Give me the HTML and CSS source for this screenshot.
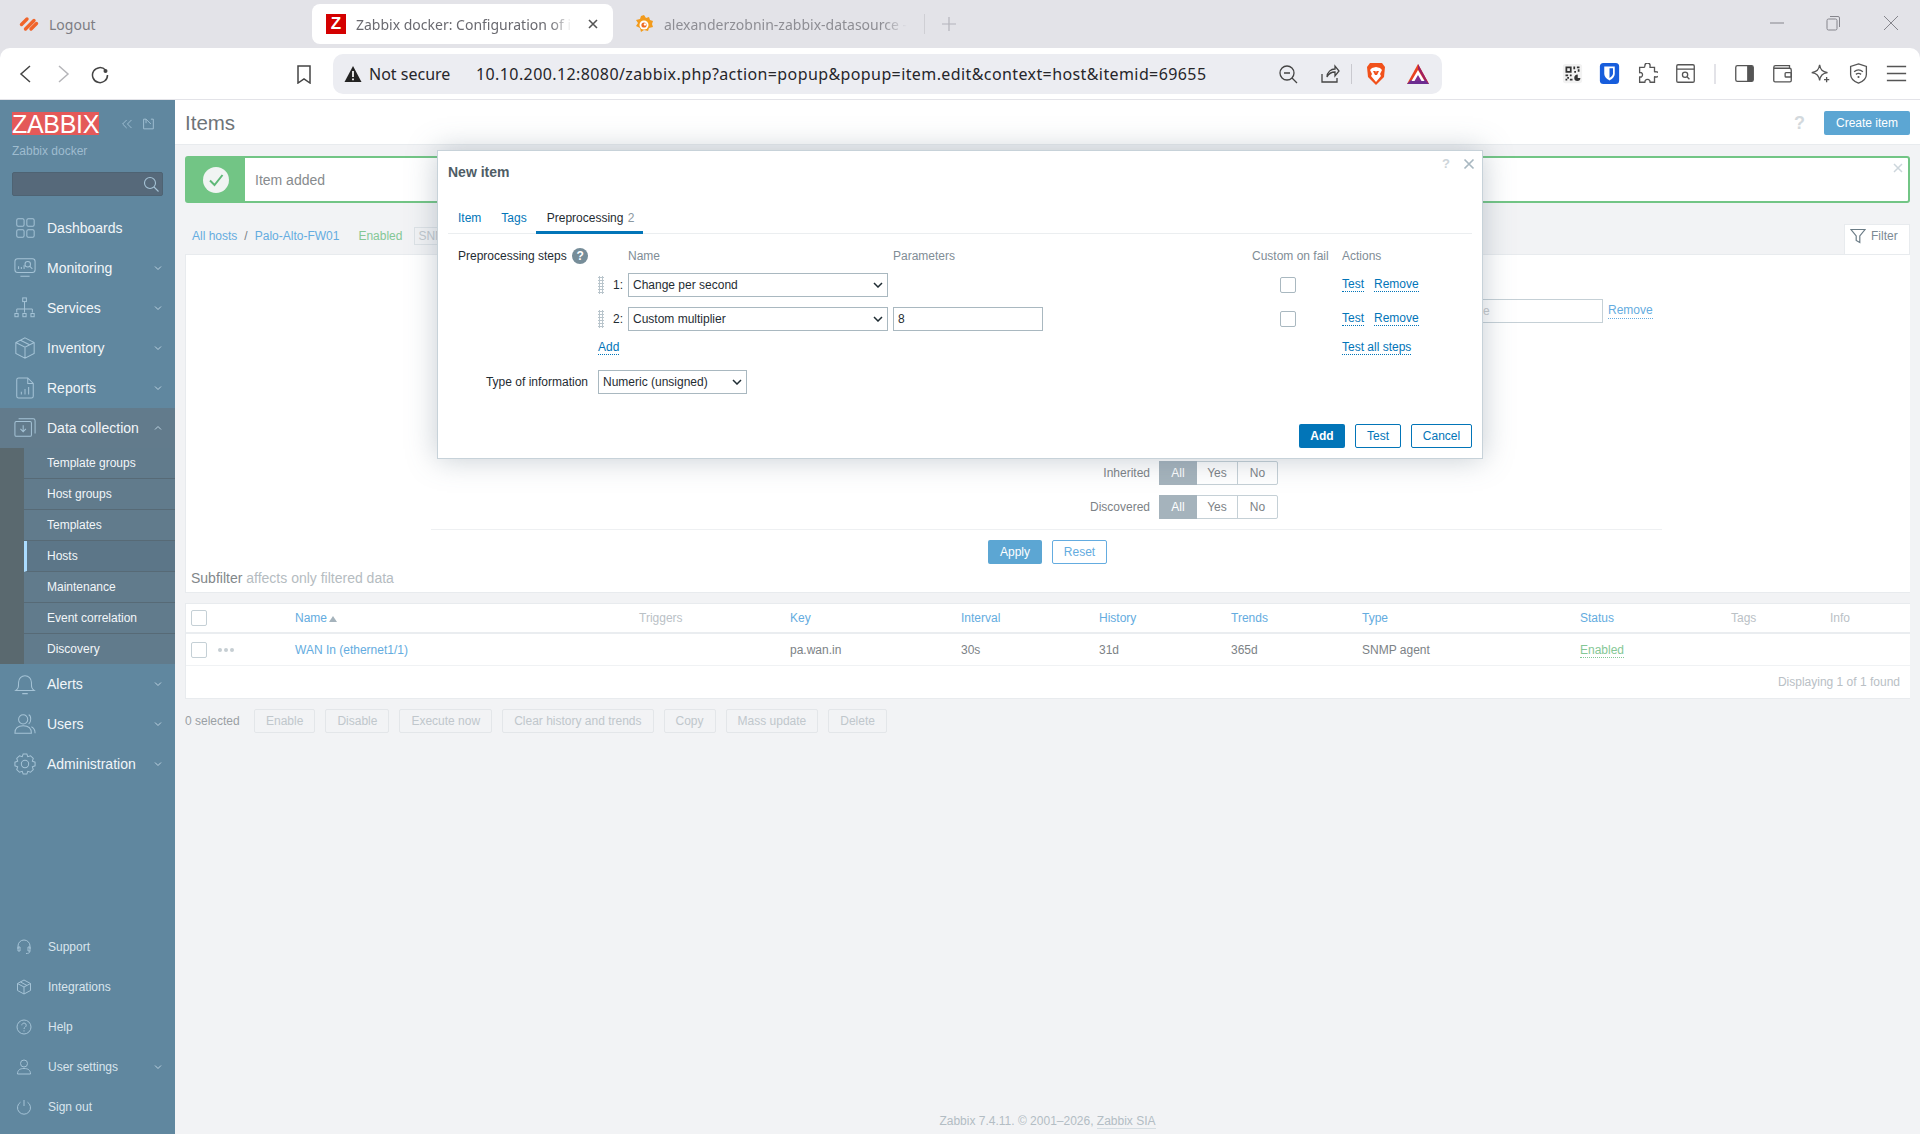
FILE: index.html
```html
<!DOCTYPE html>
<html lang="en">
<head>
    <meta charset="UTF-8">
    <title>Items</title>
    <link rel="stylesheet" href="styles.css">
</head>
<body>
<!-- browser tabs -->
<div class="tabs">
    <div class="tab tab-logout">
        <svg class="fav" viewBox="0 0 20 20"><path d="M2.500 10.500 8 5M6.500 15 15 6.500M12 15l5.500-5.500" fill="none" stroke="#f0642a" stroke-width="3.400" stroke-linecap="round"/></svg>
        <span>Logout</span>
    </div>
    <div class="tab tab-active">
        <div class="fav-z">Z</div>
        <span class="tab-title">Zabbix docker: Configuration of i</span>
        <svg class="tab-close" viewBox="0 0 12 12"><path d="M2 2l8 8M10 2l-8 8" stroke="#555" stroke-width="1.6" fill="none"/></svg>
    </div>
    <div class="tab tab-grafana">
        <svg class="fav" viewBox="0 0 20 20"><path d="M10 1l2 3 3-1 1 3 3 1-1 3 1 3-4 1-1 3-4-1-3 2-1-4-4-2 2-3-2-3 4-1 1-3z" fill="#f29b1d"/><circle cx="10" cy="11" r="4.500" fill="#fff"/><circle cx="10" cy="11" r="2.600" fill="#ef6b22"/><circle cx="11" cy="10.400" r="1.200" fill="#fff"/></svg>
        <span class="tab-title">alexanderzobnin-zabbix-datasource -</span>
    </div>
    <div class="tab-sep"></div>
    <svg class="tab-plus" viewBox="0 0 14 14"><path d="M7 0v14M0 7h14" stroke="#b4b4bb" stroke-width="1.2"/></svg>
    <div class="win">
        <svg viewBox="0 0 20 20"><path d="M3 10h14" stroke="#85858c" stroke-width="1"/></svg>
        <svg class="win-restore" viewBox="0 0 20 20"><rect x="4" y="6" width="10" height="11" rx="1.500" fill="none" stroke="#85858c"/><path d="M7 3.500h8a1.500 1.500 0 0 1 1.500 1.500V14" fill="none" stroke="#85858c"/></svg>
        <svg viewBox="0 0 20 20"><path d="M3 3l14 14M17 3L3 17" stroke="#85858c" stroke-width="1"/></svg>
    </div>
</div>

<!-- browser toolbar -->
<div class="toolbar">
    <svg class="tool" viewBox="0 0 20 20"><path d="M14 2 5 10l9 8" fill="none" stroke="#444" stroke-width="1.500"/></svg>
    <svg class="tool" viewBox="0 0 20 20"><path d="M6 2l9 8-9 8" fill="none" stroke="#b5b5b9" stroke-width="1.500"/></svg>
    <svg class="tool" viewBox="0 0 20 20"><path d="M15.500 6A7.500 7.500 0 1 0 17.500 11" fill="none" stroke="#444" stroke-width="1.500"/><circle cx="15.500" cy="7" r="2" fill="#444"/></svg>
    <svg class="tool tool-mark" viewBox="0 0 20 20"><path d="M4 2h12v17l-6-4-6 4z" fill="none" stroke="#444" stroke-width="1.500"/></svg>
    <div class="address">
        <svg class="warn" viewBox="0 0 18 18"><path d="M9 1l8.500 16H.5z" fill="#222"/><path d="M9 6v6M9 13.500v1.800" stroke="#fff" stroke-width="1.700"/></svg>
        <span class="not-secure">Not secure</span>
        <span class="url">10.10.200.12:8080/zabbix.php?action=popup&amp;popup=item.edit&amp;context=host&amp;itemid=69655</span>
        <svg class="addr-zoom" viewBox="0 0 20 20"><circle cx="9" cy="9" r="7" fill="none" stroke="#444" stroke-width="1.300"/><path d="M14 14l5 5M6 9h6" stroke="#444" stroke-width="1.300"/></svg>
        <svg class="addr-share" viewBox="0 0 20 20"><path d="M2 10v8h15v-4M7 13c0-5 4-8 8-8V2l4 5-4 5V8c-3 0-6 1-8 5z" fill="none" stroke="#444" stroke-width="1.300"/></svg>
        <div class="addr-sep"></div>
        <svg class="addr-brave" viewBox="0 0 20 24"><path d="M4 1h12l3 4-1 10-8 8-8-8L1 5z" fill="#f1511b"/><path d="M6 6l4-1 4 1 2 2-2 4 1 2-5 6-5-6 1-2-2-4z" fill="#fff"/><path d="M7 9h2.500L10 11l.5-2H13l-2 4h-2z" fill="#f1511b"/></svg>
        <svg class="addr-bat" viewBox="0 0 24 22"><path d="M12 1 1 21h22z" fill="#e8431f"/><path d="M12 1l11 20-4-3-7-12z" fill="#9e1f63"/><path d="M1 21h22l-4-4H5z" fill="#6c2c91"/><path d="M12 7l6.500 11h-13z" fill="#fff"/><path d="M12 12l-3.500 6h7z" fill="#7d2e8e"/></svg>
    </div>
    <div class="tools-right">
        <svg class="tool-r" viewBox="0 0 24 24"><rect x="1" y="1" width="22" height="22" rx="3" fill="#f2f2f2"/><path d="M4 4h7v7H4zM6 6v3h3V6zM13 4h2v3h-2zM17 4h3v2h-3zM18 7h2v3h-2zM14 9h2v2h-2zM4 13h3v2H4zM9 13h2v2H9zM6 16h2v2H6zM4 18h2v2H4zM9 18h3v2H9z" fill="#333" fill-rule="evenodd"/><path d="M14 17a4 4 0 0 1 4-4v4h3a3.500 3.500 0 0 1-7 0z" fill="#333"/></svg>
        <svg class="tool-r" viewBox="0 0 24 24"><rect x="1" y="0" width="22" height="24" rx="4" fill="#175ddc"/><path d="M6 4h12v8c0 4-3 6-6 8-3-2-6-4-6-8z" fill="#fff"/><path d="M12 6h4v6c0 2-2 4-4 5z" fill="#175ddc"/></svg>
        <svg class="tool-r" viewBox="0 0 24 24"><path d="M9 3a3 3 0 0 1 6 0c0 1-.5 2 0 2h5v5c0 .6 1-.2 2 0a3 3 0 0 1 0 6c-1 0-2-.6-2 0v6h-5c-.6 0 .2-1.500-.5-2a3 3 0 0 0-5 0c-.7.500 0 2-.5 2H3v-6c0-.7 1.500.4 2 0a3 3 0 0 0 0-5c-.5-.4-2 .6-2 0V5h5c.7 0 1-1 1-2z" fill="none" stroke="#555" stroke-width="1.500"/></svg>
        <svg class="tool-r" viewBox="0 0 24 24"><rect x="2" y="2" width="20" height="20" rx="1.500" fill="none" stroke="#555" stroke-width="1.500"/><path d="M2 7h20" stroke="#555" stroke-width="1.500"/><circle cx="11.500" cy="13.500" r="3" fill="none" stroke="#555" stroke-width="1.500"/><path d="M14 16l2.500 2.500" stroke="#555" stroke-width="1.500"/></svg>
        <div class="tool-sep"></div>
        <svg class="tool-r" viewBox="0 0 24 24"><rect x="2" y="3" width="20" height="18" rx="2" fill="none" stroke="#555" stroke-width="1.500"/><path d="M15 3h5a2 2 0 0 1 2 2v14a2 2 0 0 1-2 2h-5z" fill="#555"/></svg>
        <svg class="tool-r" viewBox="0 0 24 24"><path d="M20 6V3H4a2 2 0 0 0-2 2v15a1.500 1.500 0 0 0 1.500 1.500h17a1.500 1.500 0 0 0 1.500-1.500V8a2 2 0 0 0-2-2H2" fill="none" stroke="#555" stroke-width="1.500"/><rect x="15" y="11" width="7" height="5" rx="1" fill="none" stroke="#555" stroke-width="1.500"/></svg>
        <svg class="tool-r" viewBox="0 0 24 24"><path d="M11 2c1 6 3 8 9 9-6 1-8 3-9 9-1-6-3-8-9-9 6-1 8-3 9-9z" fill="none" stroke="#555" stroke-width="1.500"/><path d="M19 16v6M16 19h6" stroke="#555" stroke-width="1.500"/></svg>
        <svg class="tool-r" viewBox="0 0 24 24"><path d="M12 1l9 3v9c0 5-4 8-9 10-5-2-9-5-9-10V4z" fill="none" stroke="#555" stroke-width="1.500"/><path d="M7 10c3-2.500 7-2.500 10 0M9 13c2-1.500 4-1.500 6 0" fill="none" stroke="#555" stroke-width="1.500"/><circle cx="12" cy="16" r="1.200" fill="#555"/></svg>
        <svg class="tool-r" viewBox="0 0 24 24"><path d="M1 4h22M1 12h22M1 20h22" stroke="#555" stroke-width="1.500"/></svg>
    </div>
</div>

<div class="app">
    <!-- zabbix sidebar -->
    <div class="side">
        <div class="side-head">
            <div class="logo-row">
                <div class="logo">ZABBIX</div>
                <svg class="head-ico" viewBox="0 0 16 16"><path d="M7 3 2 8l5 5M13 3 8 8l5 5" fill="none" stroke="#a5c3d6" stroke-width="1.100"/></svg>
                <svg class="head-ico" viewBox="0 0 16 16"><path d="M5 2H2v12h12V2h-3M5 2l6 6M5 2v5" fill="none" stroke="#a5c3d6" stroke-width="1.100"/></svg>
            </div>
            <div class="server">Zabbix docker</div>
            <div class="side-search">
                <svg viewBox="0 0 16 16"><circle cx="7" cy="7" r="5.500" fill="none" stroke="#a5c3d6" stroke-width="1.100"/><path d="M11 11l4.500 4.500" stroke="#a5c3d6" stroke-width="1.100"/></svg>
            </div>
        </div>
        <div class="nav-item">
            <svg class="nav-ico" viewBox="0 0 24 24"><rect x="3" y="2" width="8" height="8" rx="1.500"/><rect x="14" y="2" width="8" height="8" rx="1.500"/><rect x="3" y="14" width="8" height="8" rx="1.500"/><rect x="14" y="14" width="8" height="8" rx="1.500"/></svg>
            <span>Dashboards</span>
        </div>
        <div class="nav-item">
            <svg class="nav-ico" viewBox="0 0 24 24"><rect x="1" y="2" width="22" height="15" rx="3"/><path d="M5 13v-3M8 13v-2M11 13V9M7 21h10"/><circle cx="15" cy="8" r="3"/><path d="M17 10l3 3"/></svg>
            <span>Monitoring</span>
            <svg class="chev" viewBox="0 0 8 8"><path d="M1 2.500 4 5.500l3-3"/></svg>
        </div>
        <div class="nav-item">
            <svg class="nav-ico" viewBox="0 0 24 24"><rect x="9.500" y="1" width="4" height="4"/><path d="M11.500 5v8M3 13h17M3 13v4M11.500 13v4M20 13v4"/><rect x="1" y="18" width="3.500" height="3.500"/><rect x="9.700" y="18" width="3.500" height="3.500"/><rect x="18.500" y="18" width="3.500" height="3.500"/></svg>
            <span>Services</span>
            <svg class="chev" viewBox="0 0 8 8"><path d="M1 2.500 4 5.500l3-3"/></svg>
        </div>
        <div class="nav-item">
            <svg class="nav-ico" viewBox="0 0 24 24"><path d="M12 1l10 5v12l-10 5-10-5V6zM2 6l10 5 10-5M12 11v12M7 3.500l10 5"/></svg>
            <span>Inventory</span>
            <svg class="chev" viewBox="0 0 8 8"><path d="M1 2.500 4 5.500l3-3"/></svg>
        </div>
        <div class="nav-item">
            <svg class="nav-ico" viewBox="0 0 24 24"><path d="M5 1h10l6 6v14a2 2 0 0 1-2 2H5a2 2 0 0 1-2-2V3a2 2 0 0 1 2-2zM15 1v6h6M8 19v-3M12 19v-6M16 19v-8"/></svg>
            <span>Reports</span>
            <svg class="chev" viewBox="0 0 8 8"><path d="M1 2.500 4 5.500l3-3"/></svg>
        </div>
        <div class="nav-item nav-open">
            <svg class="nav-ico" viewBox="0 0 24 24"><rect x="1" y="5" width="18" height="16" rx="1.500"/><path d="M5 2h16a2 2 0 0 1 2 2v14M10 9v7M7 13l3 3 3-3"/></svg>
            <span>Data collection</span>
            <svg class="chev" viewBox="0 0 8 8"><path d="M1 5.500 4 2.500l3 3"/></svg>
        </div>
        <div class="sub-nav">
            <div class="sub-list">
                <div class="sub-item">Template groups</div>
                <div class="sub-item">Host groups</div>
                <div class="sub-item">Templates</div>
                <div class="sub-item sub-active">Hosts</div>
                <div class="sub-item">Maintenance</div>
                <div class="sub-item">Event correlation</div>
                <div class="sub-item">Discovery</div>
            </div>
        </div>
        <div class="nav-item">
            <svg class="nav-ico" viewBox="0 0 24 24"><path d="M2 19c3-2 3-4 3-9a7 7 0 0 1 14 0c0 5 0 7 3 9zM9 22.500h6"/></svg>
            <span>Alerts</span>
            <svg class="chev" viewBox="0 0 8 8"><path d="M1 2.500 4 5.500l3-3"/></svg>
        </div>
        <div class="nav-item">
            <svg class="nav-ico" viewBox="0 0 24 24"><circle cx="10" cy="7" r="5"/><path d="M1 22c0-6 4-8 9-8s9 2 9 8zM16 2c3 1 3 8 0 10M19 15c2 1 4 3 4 7"/></svg>
            <span>Users</span>
            <svg class="chev" viewBox="0 0 8 8"><path d="M1 2.500 4 5.500l3-3"/></svg>
        </div>
        <div class="nav-item">
            <svg class="nav-ico" viewBox="0 0 24 24"><circle cx="12" cy="12" r="4"/><path d="M10 1h4l1 3 3-1 3 3-1 3 3 1v4l-3 1 1 3-3 3-3-1-1 3h-4l-1-3-3 1-3-3 1-3-3-1v-4l3-1-1-3 3-3 3 1z"/></svg>
            <span>Administration</span>
            <svg class="chev" viewBox="0 0 8 8"><path d="M1 2.500 4 5.500l3-3"/></svg>
        </div>
        <div class="side-bottom">
            <div class="nav-low">
                <svg class="low-ico" viewBox="0 0 16 16"><path d="M2 10V7a6 6 0 0 1 12 0v3M2 8h2v4H2zM12 8h2v4h-2zM14 12c0 2-2 2.500-4 2.500"/></svg>
                <span>Support</span>
            </div>
            <div class="nav-low">
                <svg class="low-ico" viewBox="0 0 16 16"><path d="M8 1l6.500 3.500v7L8 15l-6.500-3.500v-7zM1.500 4.500 8 8l6.500-3.500M8 8v7M4.500 3l6.500 3.500"/></svg>
                <span>Integrations</span>
            </div>
            <div class="nav-low">
                <svg class="low-ico" viewBox="0 0 16 16"><circle cx="8" cy="8" r="7"/><path d="M5.800 6.300a2.200 2.200 0 1 1 3.400 1.800C8.400 8.700 8 9 8 10M8 11.300v1.200"/></svg>
                <span>Help</span>
            </div>
            <div class="nav-low">
                <svg class="low-ico" viewBox="0 0 16 16"><circle cx="8" cy="4.500" r="3.500"/><path d="M1.500 15c0-4 2.500-5.500 6.500-5.500s6.500 1.500 6.500 5.500z"/></svg>
                <span>User settings</span>
                <svg class="chev" viewBox="0 0 8 8"><path d="M1 2.500 4 5.500l3-3"/></svg>
            </div>
            <div class="nav-low">
                <svg class="low-ico" viewBox="0 0 16 16"><path d="M8 1v6M4.500 3.200a6.500 6.500 0 1 0 7 0"/></svg>
                <span>Sign out</span>
            </div>
        </div>
    </div>

    <!-- page -->
    <div class="main">
        <div class="page-head">
            <div class="page-title">Items</div>
            <div class="page-help">?</div>
            <div class="btn btn-create">Create item</div>
        </div>
        <div class="content">
            <div class="msg">
                <div class="msg-icon">
                    <svg viewBox="0 0 26 26"><circle cx="13" cy="13" r="13" fill="#f1f4f3"/><path d="M7 13.500l4.500 4.500L19.500 8" fill="none" stroke="#5fb878" stroke-width="2"/></svg>
                </div>
                <div class="msg-text">Item added</div>
                <svg class="msg-close" viewBox="0 0 10 10"><path d="M1 1l8 8M9 1 1 9" stroke="#cdd6dc" stroke-width="1.500"/></svg>
            </div>
            <div class="crumbs">
                <span class="link">All hosts</span>
                <span class="crumb-sep">/</span>
                <span class="link">Palo-Alto-FW01</span>
                <span class="crumb-on">Enabled</span>
                <span class="crumb-box">SNMP</span>
                <div class="filter-tab">
                    <svg viewBox="0 0 16 16"><path d="M1 1.500h14L9.800 8v6.500l-3.600-2V8z" fill="none" stroke="#6b7c86" stroke-width="1.200"/></svg>
                    <span>Filter</span>
                </div>
            </div>

            <div class="filter-card">
                <div class="tag-row">
                    <div class="tag-input">value</div>
                    <span class="link dotted">Remove</span>
                </div>
                <div class="seg-row seg-first">
                    <div class="seg-label">Inherited</div>
                    <div class="seg">
                        <div class="seg-all">All</div>
                        <div class="seg-yes">Yes</div>
                        <div class="seg-no">No</div>
                    </div>
                </div>
                <div class="seg-row">
                    <div class="seg-label">Discovered</div>
                    <div class="seg">
                        <div class="seg-all">All</div>
                        <div class="seg-yes">Yes</div>
                        <div class="seg-no">No</div>
                    </div>
                </div>
                <div class="filter-line"></div>
                <div class="filter-btns">
                    <div class="btn btn-apply">Apply</div>
                    <div class="btn btn-reset">Reset</div>
                </div>
                <div class="subfilter">Subfilter <span>affects only filtered data</span></div>
            </div>

            <div class="table-card">
                <div class="row row-head">
                    <div><div class="check"></div></div>
                    <div class="link">Name <i class="sort"></i></div>
                    <div class="dim">Triggers</div>
                    <div class="link">Key</div>
                    <div class="link">Interval</div>
                    <div class="link">History</div>
                    <div class="link">Trends</div>
                    <div class="link">Type</div>
                    <div class="link">Status</div>
                    <div class="dim">Tags</div>
                    <div class="dim">Info</div>
                </div>
                <div class="row row-body">
                    <div class="cell-check"><div class="check"></div><div class="dots"><i></i><i></i><i></i></div></div>
                    <div class="link">WAN In (ethernet1/1)</div>
                    <div></div>
                    <div>pa.wan.in</div>
                    <div>30s</div>
                    <div>31d</div>
                    <div>365d</div>
                    <div>SNMP agent</div>
                    <div><span class="enabled">Enabled</span></div>
                    <div></div>
                    <div></div>
                </div>
                <div class="table-foot">Displaying 1 of 1 found</div>
            </div>

            <div class="actions">
                <span class="selected">0 selected</span>
                <div class="btn btn-off">Enable</div>
                <div class="btn btn-off">Disable</div>
                <div class="btn btn-off">Execute now</div>
                <div class="btn btn-off">Clear history and trends</div>
                <div class="btn btn-off">Copy</div>
                <div class="btn btn-off">Mass update</div>
                <div class="btn btn-off">Delete</div>
            </div>
        </div>
        <div class="page-foot">Zabbix 7.4.11. © 2001–2026, <span>Zabbix SIA</span></div>
    </div>
</div>

<!-- popup -->
<div class="modal">
    <div class="modal-title">New item</div>
    <div class="modal-tools">
        <span class="modal-help">?</span>
        <svg viewBox="0 0 12 12"><path d="M1.500 1.500l9 9M10.500 1.500l-9 9" stroke="#a9b8c1" stroke-width="1.700"/></svg>
    </div>
    <div class="modal-tabs">
        <div class="mtab">Item</div>
        <div class="mtab">Tags</div>
        <div class="mtab mtab-on">Preprocessing <span>2</span></div>
    </div>
    <div class="modal-form">
        <div class="form-label form-label-left">Preprocessing steps <i class="help-dot">?</i></div>
        <div class="steps">
            <div class="step-head"></div>
            <div class="step-head">Name</div>
            <div class="step-head step-param">Parameters</div>
            <div></div>
            <div class="step-head">Custom on fail</div>
            <div class="step-head">Actions</div>

            <div class="step-num"><div class="drag"></div><span>1:</span></div>
            <div class="select">Change per second <svg viewBox="0 0 10 6"><path d="M1 1l4 4 4-4" fill="none" stroke="#1f2c33" stroke-width="1.500"/></svg></div>
            <div></div>
            <div></div>
            <div><div class="check check-step"></div></div>
            <div class="step-act"><span class="mlink">Test</span><span class="mlink">Remove</span></div>

            <div class="step-num"><div class="drag"></div><span>2:</span></div>
            <div class="select">Custom multiplier <svg viewBox="0 0 10 6"><path d="M1 1l4 4 4-4" fill="none" stroke="#1f2c33" stroke-width="1.500"/></svg></div>
            <div class="step-param"><div class="input">8</div></div>
            <div></div>
            <div><div class="check check-step"></div></div>
            <div class="step-act"><span class="mlink">Test</span><span class="mlink">Remove</span></div>

            <div class="step-add"><span class="mlink">Add</span></div>
            <div class="step-all"><span class="mlink">Test all steps</span></div>
        </div>
    </div>
    <div class="type-row">
        <div class="form-label">Type of information</div>
        <div class="select select-type">Numeric (unsigned) <svg viewBox="0 0 10 6"><path d="M1 1l4 4 4-4" fill="none" stroke="#1f2c33" stroke-width="1.500"/></svg></div>
    </div>
    <div class="modal-foot">
        <div class="btn mbtn-add">Add</div>
        <div class="btn mbtn">Test</div>
        <div class="btn mbtn mbtn-cancel">Cancel</div>
    </div>
</div>
</body>
</html>
```

FILE: styles.css
```css
* {
    padding: 0;
    margin: 0;
    box-sizing: border-box;
}

body {
    width: 1920px;
    height: 1134px;
    overflow: hidden;
    display: flex;
    flex-direction: column;
    font-family: "Liberation Sans", Arial, sans-serif;
    font-size: 12px;
    color: #7c8286;
    background: #e3e3e8;
}

/* browser tabs */
.tabs {
    height: 48px;
    display: flex;
    align-items: flex-start;
    font-family: "Noto Sans", sans-serif;
    font-size: 14px;
    color: #7d7d83;
}

.tab {
    height: 40px;
    margin-top: 4px;
    display: flex;
    align-items: center;
}

.tab-logout {
    width: 312px;
    padding-left: 19px;
}

.tab-active {
    width: 301px;
    padding-left: 14px;
    background: #fff;
    border-radius: 8px;
    color: #6a6a70;
}

.tab-grafana {
    width: 311px;
    padding-left: 21px;
    color: #8e8e94;
}

.fav {
    width: 20px;
    height: 20px;
    margin-right: 10px;
    flex: none;
}

.fav-z {
    width: 20px;
    height: 20px;
    margin-right: 10px;
    flex: none;
    background: #d40000;
    color: #fff;
    font: bold 17px/20px "Liberation Sans", sans-serif;
    text-align: center;
}

.tab-title {
    white-space: nowrap;
    -webkit-mask-image: linear-gradient(to right, #000 90%, transparent 100%);
    mask-image: linear-gradient(to right, #000 90%, transparent 100%);
}

.tab-active .tab-title {
    width: 216px;
}

.tab-close {
    width: 12px;
    height: 12px;
    margin-left: 15px;
}

.tab-sep {
    width: 1px;
    height: 20px;
    margin-top: 14px;
    background: #cfcfd4;
}

.tab-plus {
    width: 14px;
    height: 14px;
    margin: 17px 0 0 17px;
}

.win {
    margin-left: auto;
    padding: 13px 19px 0 0;
    display: flex;
    gap: 36px;
}

.win svg {
    width: 20px;
    height: 20px;
}

.win .win-restore {
    margin-right: 2px;
}

/* browser toolbar */
.toolbar {
    height: 52px;
    padding: 6px 0 6px 16px;
    display: flex;
    align-items: center;
    gap: 17px;
    background: #fff;
    border-bottom: 1px solid #e3e3e8;
    border-radius: 10px 10px 0 0;
}

.tool {
    width: 20px;
    height: 20px;
    flex: none;
}

.tool-mark {
    margin-left: 167px;
    margin-right: 2px;
}

.address {
    width: 1109px;
    height: 40px;
    padding: 0 12px 0 11px;
    display: flex;
    flex: none;
    align-items: center;
    background: #ecedf2;
    border-radius: 10px;
    font-family: "Noto Sans", sans-serif;
    font-size: 16px;
    color: #26262a;
}

.warn {
    width: 18px;
    height: 18px;
    flex: none;
}

.not-secure {
    margin-left: 7px;
    width: 107px;
    flex: none;
}

.url {
    width: 802px;
    flex: none;
    letter-spacing: 0.4px;
    white-space: nowrap;
}

.addr-zoom, .addr-share {
    width: 20px;
    height: 20px;
    flex: none;
}

.addr-share {
    margin-left: 22px;
}

.addr-sep {
    width: 1px;
    height: 20px;
    margin-left: 11px;
    background: #c9c9cf;
}

.addr-brave {
    width: 20px;
    height: 24px;
    margin-left: 14px;
    flex: none;
}

.addr-bat {
    width: 24px;
    height: 22px;
    margin-left: 20px;
    flex: none;
}

.tools-right {
    margin-left: 101px;
    display: flex;
    align-items: center;
    gap: 13.800px;
}

.tool-r {
    width: 21px;
    height: 21px;
    margin: 0 1.500px;
    flex: none;
}

.tool-sep {
    width: 2px;
    height: 20px;
    margin: 0 3px;
    background: #e3e3e8;
}

/* zabbix sidebar */
.app {
    flex: 1;
    display: flex;
    min-height: 0;
}

.side {
    width: 175px;
    flex: none;
    display: flex;
    flex-direction: column;
    background: #60879f;
    color: #f2f6f9;
    font-size: 14px;
}

.side-head {
    height: 108px;
    padding: 12px 12px 0;
}

.logo-row {
    display: flex;
    align-items: center;
}

.logo {
    width: 91px;
    height: 23px;
    margin-right: 22px;
    background: #e45959;
    color: #fff;
    font-size: 25px;
    line-height: 24px;
    letter-spacing: -0.3px;
    text-align: center;
}

.head-ico {
    width: 16px;
    height: 16px;
    margin-right: 8px;
}

.server {
    margin-top: 9px;
    font-size: 12px;
    line-height: 14px;
    color: #9fbccf;
}

.side-search {
    height: 24px;
    margin-top: 14px;
    padding: 3px 3px 0 0;
    display: flex;
    justify-content: flex-end;
    background: #56697a;
    border: 1px solid #4e6373;
    border-radius: 2px;
}

.side-search svg {
    width: 16px;
    height: 16px;
}

.nav-item {
    height: 40px;
    padding: 0 13px 0 14px;
    flex: none;
    display: flex;
    align-items: center;
    gap: 11px;
}

.nav-open {
    background: #627b8c;
}

.nav-ico {
    width: 22px;
    height: 22px;
    flex: none;
    fill: none;
    stroke: #a5c3d6;
    stroke-width: 1.100;
}

.chev {
    width: 8px;
    height: 8px;
    margin-left: auto;
    fill: none;
    stroke: #bcd2e0;
    stroke-width: 1;
}

.sub-nav {
    padding-left: 24px;
    background: #5a696f;
}

.sub-list {
    background: #617b8c;
    font-size: 12px;
}

.sub-item {
    height: 31px;
    padding-left: 23px;
    line-height: 30px;
    border-bottom: 1px solid #576a76;
}

.sub-item:last-child {
    height: 30px;
    border-bottom: 0;
}

.sub-active {
    padding-left: 20px;
    background: #5c7688;
    border-left: 3px solid #abdcff;
}

.side-bottom {
    margin-top: auto;
    padding-bottom: 7px;
}

.nav-low {
    height: 40px;
    padding: 0 13px 0 16px;
    display: flex;
    align-items: center;
    gap: 16px;
    font-size: 12px;
    color: #d9e5ed;
}

.low-ico {
    width: 16px;
    height: 16px;
    flex: none;
    fill: none;
    stroke: #a5c3d6;
    stroke-width: 1;
}

/* page */
.main {
    flex: 1;
    display: flex;
    flex-direction: column;
    background: #f2f3f5;
}

.page-head {
    height: 45px;
    flex: none;
    padding: 11px 10px 0;
    display: flex;
    background: #fff;
    border-bottom: 1px solid #e8ebee;
}

.page-title {
    flex: 1;
    font-size: 20.500px;
    line-height: 23px;
    color: #6e7478;
}

.page-help {
    margin-right: 19px;
    font-size: 18px;
    line-height: 24px;
    font-weight: bold;
    color: #d3d9dd;
}

.btn {
    height: 24px;
    flex: none;
    line-height: 22px;
    text-align: center;
    border: 1px solid transparent;
    border-radius: 2px;
}

.btn-create {
    width: 86px;
    background: #5ca6d3;
    color: #fff;
}

.content {
    padding: 0 10px;
}

.msg {
    height: 47px;
    margin-top: 11px;
    display: flex;
    align-items: center;
    background: #fff;
    border: 2px solid #72c585;
    border-radius: 3px;
    position: relative;
}

.msg-icon {
    width: 58px;
    height: 100%;
    display: flex;
    align-items: center;
    justify-content: center;
    background: #72c585;
}

.msg-icon svg {
    width: 26px;
    height: 26px;
}

.msg-text {
    margin-left: 10px;
    font-size: 14px;
    color: #878b8e;
}

.msg-close {
    position: absolute;
    top: 5px;
    right: 5px;
    width: 10px;
    height: 10px;
}

.crumbs {
    height: 51px;
    padding: 21px 0 0 7px;
    display: flex;
    line-height: 24px;
}

.link {
    color: #64ace0;
}

.dotted {
    border-bottom: 1px dotted #64ace0;
    line-height: 15px;
}

.crumb-sep {
    margin: 0 7px;
    color: #7c8286;
}

.crumb-on {
    margin-left: 19px;
    color: #84c795;
}

.crumb-box {
    height: 18px;
    margin: 3px 0 0 12px;
    padding: 0 3px;
    line-height: 16px;
    color: #c0c8cd;
    border: 1px solid #dde2e6;
}

.filter-tab {
    width: 66px;
    height: 30px;
    margin-left: auto;
    padding: 0 0 7px 5px;
    display: flex;
    align-items: center;
    gap: 5px;
    background: #fff;
    border: 1px solid #e8ebee;
    border-bottom: 0;
    color: #7b8a94;
}

.filter-tab svg {
    width: 16px;
    height: 16px;
}

.filter-card {
    height: 339px;
    padding-top: 44px;
    background: #fff;
    border: 1px solid #e8ebee;
    border-right: 0;
}

.tag-row {
    height: 24px;
    margin-left: 1270px;
    display: flex;
    align-items: center;
    gap: 5px;
}

.tag-input {
    width: 147px;
    height: 24px;
    padding-left: 4px;
    line-height: 22px;
    color: #c6c9cb;
    border: 1px solid #c5d0d6;
}

.seg-row {
    height: 24px;
    margin-top: 10px;
    display: flex;
}

.seg-first {
    margin-top: 138px;
}

.seg-label {
    width: 964px;
    text-align: right;
    line-height: 24px;
}

.seg {
    height: 24px;
    margin-left: 9px;
    display: flex;
    line-height: 22px;
    text-align: center;
    border: 1px solid #c5d0d6;
    border-radius: 2px;
}

.seg-all {
    width: 38px;
    margin: -1px 0 -1px -1px;
    line-height: 24px;
    background: #a5b3bc;
    color: #fff;
}

.seg-yes {
    width: 41px;
    border-right: 1px solid #c5d0d6;
}

.seg-no {
    width: 39px;
}

.filter-line {
    width: 1231px;
    height: 1px;
    margin: 10px 0 0 245px;
    background: #eef0f2;
}

.filter-btns {
    margin: 10px 0 0 802px;
    display: flex;
    gap: 10px;
}

.btn-apply {
    width: 54px;
    background: #5ca6d3;
    color: #fff;
}

.btn-reset {
    width: 55px;
    color: #64ace0;
    border-color: #64ace0;
    background: #fff;
}

.subfilter {
    margin: 6px 0 0 5px;
    font-size: 14px;
    line-height: 16px;
    color: #82878a;
}

.subfilter span {
    color: #b5bcc1;
}

/* table */
.table-card {
    height: 96px;
    margin-top: 10px;
    background: #fff;
    border: 1px solid #e8ebee;
    border-right: 0;
}

.row {
    padding-left: 5px;
    display: grid;
    grid-template-columns: 104px 344px 151px 171px 138px 132px 131px 218px 151px 99px 1fr;
    align-items: center;
}

.row-head {
    height: 30px;
    border-bottom: 2px solid #eaedf0;
}

.row-body {
    height: 32px;
    border-bottom: 1px solid #f0f2f4;
}

.dim {
    color: #bac1c6;
}

.sort {
    display: inline-block;
    width: 0;
    height: 0;
    margin-left: -1px;
    border-left: 4px solid transparent;
    border-right: 4px solid transparent;
    border-bottom: 6px solid #a5b3bc;
}

.check {
    width: 16px;
    height: 16px;
    border: 1px solid #c5d0d6;
    border-radius: 2px;
    background: #fff;
}

.cell-check {
    display: flex;
    align-items: center;
    gap: 11px;
}

.dots {
    display: flex;
    gap: 2px;
}

.dots i {
    width: 4px;
    height: 4px;
    border-radius: 50%;
    background: #c6ced3;
}

.enabled {
    color: #84c795;
    border-bottom: 1px dotted #84c795;
}

.table-foot {
    padding: 9px 10px 0;
    text-align: right;
    color: #b9c0c5;
}

.actions {
    margin-top: 10px;
    display: flex;
    align-items: center;
    gap: 10px;
}

.selected {
    width: 59px;
    color: #9aa0a4;
}

.btn-off {
    padding: 0 11px;
    color: #c0c7cc;
    background: #f2f3f5;
    border-color: #e3e6e9;
}

.page-foot {
    margin-top: auto;
    padding-bottom: 6px;
    text-align: center;
    line-height: 14px;
    color: #b3bdc4;
}

.page-foot span {
    border-bottom: 1px solid #d5dde2;
}

/* popup */
.modal {
    position: absolute;
    top: 150px;
    left: 437px;
    width: 1046px;
    height: 309px;
    padding: 0 10px;
    display: flex;
    flex-direction: column;
    background: #fff;
    border: 1px solid #c7d2d9;
    box-shadow: 0 0 28px rgba(90, 110, 125, 0.35);
    color: #1f2c33;
}

.modal-title {
    margin-top: 13px;
    font-size: 14px;
    font-weight: bold;
    line-height: 16px;
    color: #4f5d66;
}

.modal-tools {
    position: absolute;
    top: 5px;
    right: 7px;
    display: flex;
    align-items: center;
    gap: 13px;
}

.modal-tools svg {
    width: 12px;
    height: 12px;
}

.modal-help {
    font-size: 13px;
    font-weight: bold;
    color: #cdd5da;
}

.modal-tabs {
    height: 30px;
    margin-top: 24px;
    display: flex;
    border-bottom: 1px solid #ebeef0;
}

.mtab {
    padding: 0 10px;
    line-height: 28px;
    color: #0275b8;
}

.mtab-on {
    width: 107px;
    height: 30px;
    margin-left: -1px;
    padding-left: 11px;
    color: #1f2c33;
    border-bottom: 3px solid #0275b8;
    white-space: nowrap;
}

.mtab-on span {
    margin-left: 1px;
    color: #8b98a1;
}

.modal-form {
    margin-top: 13px;
    display: flex;
}

.form-label {
    width: 140px;
    text-align: right;
    line-height: 24px;
}

.form-label-left {
    padding-left: 10px;
    padding-top: 1px;
    text-align: left;
    line-height: 16px;
    white-space: nowrap;
}

.help-dot {
    display: inline-block;
    width: 16px;
    height: 16px;
    margin-left: 2px;
    border-radius: 50%;
    background: #768d99;
    color: #fff;
    font-style: normal;
    font-weight: bold;
    line-height: 16px;
    text-align: center;
}

.steps {
    margin-left: 10px;
    flex: 1;
    display: grid;
    grid-template-columns: 30px 260px 155px 209px 90px 1fr;
    grid-template-rows: 16px 24px 24px 16px;
    row-gap: 10px;
    align-items: center;
}

.step-head {
    padding-top: 1px;
    color: #7f8d96;
    white-space: nowrap;
}

.step-param {
    padding-left: 5px;
}

.step-num {
    display: flex;
    align-items: center;
    justify-content: space-between;
    padding-right: 5px;
}

.drag {
    width: 6px;
    height: 18px;
    background: radial-gradient(circle, #b9c5cc 1px, transparent 1.200px) 0 0 / 3px 3px;
}

.select {
    height: 24px;
    padding: 0 4px;
    display: flex;
    align-items: center;
    justify-content: space-between;
    background: #fff;
    border: 1px solid #a9b8c0;
}

.select svg {
    width: 10px;
    height: 6px;
}

.select-type {
    width: 149px;
    margin-left: 10px;
}

.input {
    width: 150px;
    height: 24px;
    padding-left: 4px;
    line-height: 22px;
    border: 1px solid #a9b8c0;
}

.check-step {
    margin: -1px 0 0 28px;
    border-color: #a9b8c0;
}

.step-act {
    margin-top: -1px;
    display: flex;
    gap: 10px;
}

.mlink {
    color: #0275b8;
    border-bottom: 1px dotted #0275b8;
    line-height: 14px;
    display: inline-block;
}

.step-add {
    grid-column: 1 / 5;
    margin-top: -4px;
}

.step-all {
    grid-column: 6;
    margin-top: -4px;
}

.type-row {
    margin-top: 13px;
    display: flex;
}

.modal-foot {
    margin-top: auto;
    padding-bottom: 10px;
    display: flex;
    justify-content: flex-end;
    gap: 10px;
}

.mbtn-add {
    width: 46px;
    background: #0275b8;
    color: #fff;
    font-weight: bold;
}

.mbtn {
    width: 46px;
    color: #0275b8;
    border-color: #0275b8;
    background: #fff;
}

.mbtn-cancel {
    width: 61px;
}
```
